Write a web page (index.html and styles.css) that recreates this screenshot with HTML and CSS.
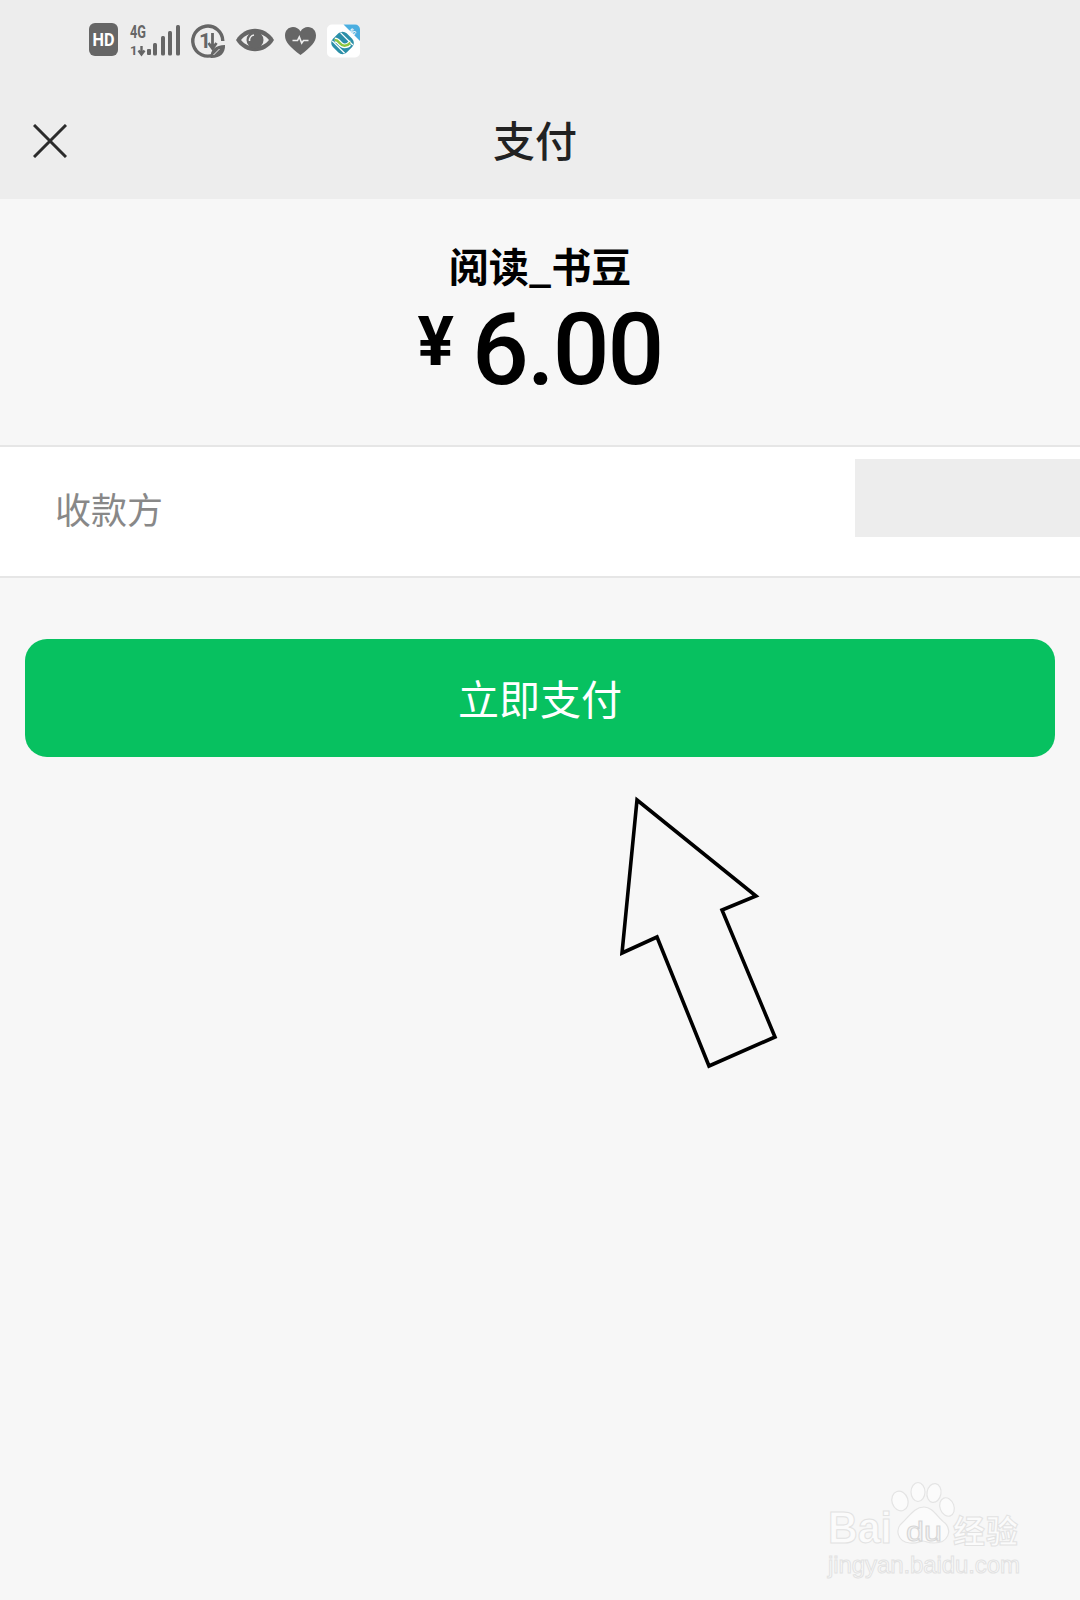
FILE: index.html
```html
<!DOCTYPE html>
<html lang="zh-CN">
<head>
<meta charset="utf-8">
<title>支付</title>
<link rel="stylesheet" href="styles.css">
</head>
<body>
<div class="page">
  <header class="top">
    <div class="status">
      <svg class="ic ic-hd" viewBox="0 0 29 33"><rect width="29" height="33" rx="6" fill="#666"/><text x="3.500" y="23" textLength="22" lengthAdjust="spacingAndGlyphs" class="st-hd">HD</text></svg>
      <svg class="ic ic-sig" viewBox="0 0 51 34">
        <text x="1" y="15" textLength="16" lengthAdjust="spacingAndGlyphs" class="st-4g">4G</text>
        <text x="1" y="32" class="st-1">1</text>
        <path d="M12.500 23v8M9.500 27.500l3 4 3-4" fill="none" stroke="#666" stroke-width="2.400"/>
        <rect x="18" y="26" width="4" height="6" rx="1" fill="#666"/>
        <rect x="24" y="20" width="4" height="12.500" rx="1.500" fill="#666"/>
        <rect x="32" y="13" width="4" height="19.500" rx="1.500" fill="#666"/>
        <rect x="39" y="8" width="4" height="24.500" rx="1.500" fill="#666"/>
        <rect x="47" y="2" width="4" height="30.500" rx="1.500" fill="#666"/>
      </svg>
      <svg class="ic ic-data" viewBox="0 0 34 34">
        <path d="M23 30.700A15 15 0 1 1 31.800 17" fill="none" stroke="#666" stroke-width="3.400"/>
        <text x="8" y="24" class="st-data">1</text>
        <path d="M21.500 9v15M17.500 19l4 5.500 4-5.500" fill="none" stroke="#666" stroke-width="2.800"/>
        <path d="M19.500 34c-.5-8 5-13 14.500-13c.5 8-5 13.500-14.500 13z" fill="#666"/>
        <path d="M22.500 31l6-6" stroke="#ededed" stroke-width="1"/>
      </svg>
      <svg class="ic ic-eye" viewBox="0 0 38 24">
        <path d="M0 12C9 -3 29 -3 38 12C29 27 9 27 0 12Z" fill="#666"/>
        <path d="M5 12C12 3 26 3 33 12C26 21 12 21 5 12Z" fill="#ededed"/>
        <circle cx="19" cy="12" r="8.500" fill="#666"/>
        <path d="M13.500 13a5.500 5.500 0 0 1 4.500-6" fill="none" stroke="#ededed" stroke-width="1.600"/>
      </svg>
      <svg class="ic ic-heart" viewBox="0 0 31 28">
        <path d="M15.500 28C5 20 0 15 0 8.500C0 3.500 3.500 0 8 0C11 0 14 1.500 15.500 4.500C17 1.500 20 0 23 0C27.500 0 31 3.500 31 8.500C31 15 26 20 15.500 28Z" fill="#666"/>
        <path d="M7.500 13.500h5l1.800-3.500 2.400 6 1.800-2.500h5" fill="none" stroke="#ededed" stroke-width="1.600"/>
      </svg>
      <svg class="ic ic-app" viewBox="0 0 34 34">
        <rect width="34" height="34" rx="5" fill="#fff"/>
        <path d="M17 0h12a5 5 0 0 1 5 5v12z" fill="#4aaee0"/>
        <text x="25" y="9" class="st-app" transform="rotate(45 25 9)">5G</text>
        <g transform="rotate(45 16 19)">
          <rect x="6" y="9" width="20" height="20" rx="6" fill="#2b8fa8"/>
          <path d="M7 13h18M7 25h18" stroke="#fff" stroke-width="1.300"/>
          <path d="M8 16C13 16 13 22 18 22S23 19 24 19" transform="rotate(-45 16 19)" fill="none" stroke="#fff" stroke-width="5"/>
          <path d="M8 16C13 16 13 22 18 22S23 19 24 19" transform="rotate(-45 16 19)" fill="none" stroke="#8cc63f" stroke-width="2.600"/>
        </g>
      </svg>
    </div>
    <div class="nav">
      <svg class="close" viewBox="0 0 34 34"><path d="M1 1L33 33M33 1L1 33" stroke="#2b2b2b" stroke-width="3" fill="none"/></svg>
      <h1 class="nav-title">支付</h1>
      <span></span>
    </div>
  </header>

  <section class="summary">
    <div class="merchant">阅读_书豆</div>
    <div class="amount"><span class="yen">¥</span><span class="num">6.00</span></div>
  </section>

  <section class="row">
    <span class="row-label">收款方</span>
    <div class="row-mask"></div>
  </section>

  <button class="pay">立即支付</button>

  <svg class="arrow" viewBox="0 0 170 280"><polygon points="17,5 136,101 102,115 155,242 89,271 37,142 2,158" fill="none" stroke="#000" stroke-width="3.600" stroke-linejoin="miter"/></svg>

  <svg class="mark" viewBox="0 0 200 100">
    <g fill="#fbfbfb" stroke="#e4e4e4" stroke-width="1.200">
      <ellipse cx="72" cy="18" rx="8" ry="10" transform="rotate(-18 72 18)"/>
      <ellipse cx="90" cy="9" rx="7" ry="9.500"/>
      <ellipse cx="106" cy="10" rx="7" ry="9.500" transform="rotate(10 106 10)"/>
      <ellipse cx="119" cy="24" rx="7" ry="9.500" transform="rotate(-20 119 24)"/>
      <path d="M96 24c9 0 13 10 21 16c7 7 4 20-11 20c-7 0-8-2-11-2s-6 3-13 2c-13-1-15-14-8-20c7-6 12-16 22-16z"/>
    </g>
    <text x="0" y="60" textLength="64" lengthAdjust="spacingAndGlyphs" class="mk mk-bai">Bai</text>
    <text x="78" y="58" textLength="36" lengthAdjust="spacingAndGlyphs" class="mk mk-du">du</text>
    <text x="125" y="60" textLength="65" class="mk mk-cn">经验</text>
    <text x="0" y="90" textLength="192" class="mk mk-url">jingyan.baidu.com</text>
  </svg>
</div>
</body>
</html>
```
FILE: styles.css
```css
* { box-sizing: border-box; }
html, body { margin: 0; padding: 0; }
body { background: #f7f7f7; font-family: "Noto Sans CJK SC", "Noto Sans", sans-serif; }
.page { position: relative; width: 1080px; height: 1600px; overflow: hidden; display: flex; flex-direction: column; }

.top { background: #ededed; height: 199px; flex: none; }
.status { height: 84px; padding: 23px 0 0 89px; display: flex; align-items: flex-start; gap: 11px; }
.ic { display: block; flex: none; overflow: visible; }
.ic-hd { width: 29px; height: 33px; }
.ic-sig { width: 51px; height: 34px; }
.ic-data { width: 34px; height: 34px; margin-top: 1px; }
.ic-eye { width: 38px; height: 24px; margin-top: 5px; }
.ic-heart { width: 31px; height: 28px; margin-top: 4px; }
.ic-app { width: 33px; height: 34px; margin-top: 1px; }
.st-hd { font: 700 19px "Roboto", sans-serif; fill: #fff; }
.st-4g { font: 700 18px "Roboto", sans-serif; fill: #666; }
.st-1 { font: 700 13px "Roboto", sans-serif; fill: #666; }
.st-data { font: 700 21px "Roboto", sans-serif; fill: #666; }
.st-app { font: 700 6px "Roboto", sans-serif; fill: #fff; text-anchor: middle; }

.nav { height: 115px; display: grid; grid-template-columns: 1fr auto 1fr; align-items: center; padding: 0 43px 5px 33px; }
.close { width: 34px; height: 34px; display: block; margin-top: 4px; }
.nav-title { margin: 0; font-size: 42px; line-height: 56px; font-weight: 500; color: #222; }

.summary { height: 246px; flex: none; padding-top: 38px; display: flex; flex-direction: column; align-items: center; }
.merchant { font-size: 40px; line-height: 56px; font-weight: 700; color: #000; }
.amount { display: flex; align-items: flex-start; gap: 18px; height: 110px; margin-top: 2px; color: #000; font-family: "Roboto", sans-serif; }
.yen { font-size: 68px; line-height: 94px; font-weight: 700; }
.num { font-size: 100px; line-height: 110px; font-weight: 500; letter-spacing: -2px; }

.row { height: 133px; flex: none; background: #fff; border-top: 2px solid #e6e6e6; border-bottom: 2px solid #e6e6e6; display: flex; justify-content: space-between; align-items: flex-start; padding-left: 55px; }
.row-label { font-size: 36px; line-height: 50px; color: #888; margin-top: 36px; }
.row-mask { width: 225px; height: 78px; margin-top: 12px; background: #ededed; }

.pay { flex: none; margin: 61px 25px 0; height: 118px; border: 0; border-radius: 22px; background: #07c160; color: #fff; font-family: inherit; font-size: 41px; line-height: 56px; font-weight: 400; padding: 0 0 2px; }

.arrow { position: absolute; left: 620px; top: 795px; width: 170px; height: 280px; }
.mark { position: absolute; left: 828px; top: 1483px; width: 200px; height: 100px; overflow: visible; }
.mk { fill: #fbfbfb; stroke: #e2e2e2; stroke-width: 1px; }
.mk-bai { font: 700 44px "Liberation Sans", sans-serif; }
.mk-du { font: 400 28px "Liberation Sans", sans-serif; fill: #f3f3f3; stroke: #d6d6d6; }
.mk-cn { font: 700 32px "Noto Sans CJK SC", sans-serif; }
.mk-url { font: 400 24px "Liberation Sans", sans-serif; }
```
